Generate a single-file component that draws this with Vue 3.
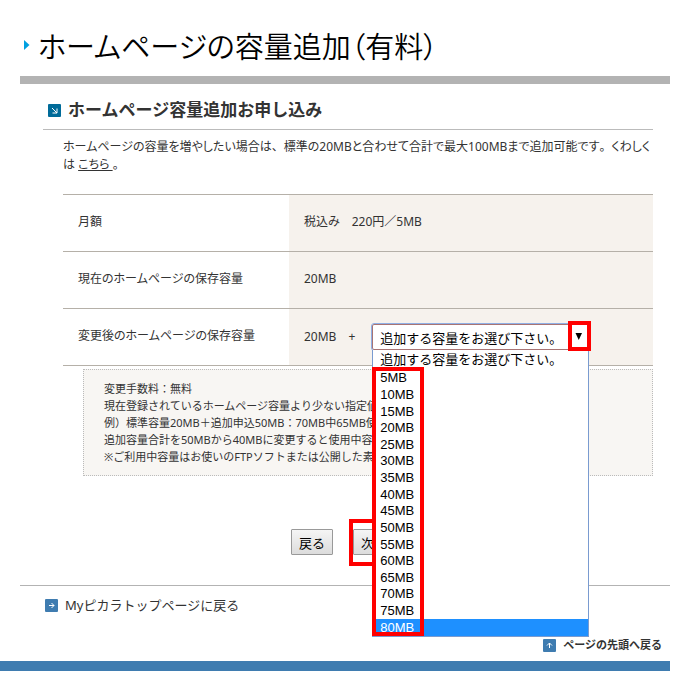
<template>
  <div class="page">
    <header class="title">
      <svg class="title-mark" width="6" height="10" viewBox="0 0 6 10" aria-hidden="true">
        <path d="M0 0l5.500 5L0 10z" fill="#00a0e0" />
      </svg>
      <h1>ホームページの容量追加（有料）</h1>
    </header>

    <main class="content">
      <h2>
        <svg width="13" height="13" viewBox="0 0 13 13" aria-hidden="true">
          <rect width="13" height="13" rx="1" fill="#006b99" />
          <path d="M4 4l5 5M9 4.500V9H4.500" fill="none" stroke="#fff" />
        </svg>
        ホームページ容量追加お申し込み
      </h2>

      <div class="body">
        <p class="lead">
          ホームページの容量を増やしたい場合は<span class="full">、</span>標準の20MBと合わせて合計で最大100MBまで追加可能です<span class="full">。</span>くわしく<span class="keep">は
          <a href="#">こちら </a>。</span>
        </p>

        <table>
          <tbody>
            <tr>
              <th scope="row">月額</th>
              <td>税込み　220円／5MB</td>
            </tr>
            <tr>
              <th scope="row">現在のホームページの保存容量</th>
              <td>20MB</td>
            </tr>
            <tr>
              <th scope="row"><label for="capacity">変更後のホームページの保存容量</label></th>
              <td>
                <div class="capacity">
                  <span>20MB　+</span>
                  <div class="picker">
                    <select id="capacity" v-model="selected" @mousedown.prevent="isOpen = !isOpen">
                      <option value="">{{ placeholder }}</option>
                      <option v-for="size in sizes" :key="size" :value="size">{{ size }}MB</option>
                    </select>
                    <svg class="arrow" width="8" height="7" viewBox="0 0 8 7" aria-hidden="true">
                      <path d="M0.500 0h6.500L3.750 7z" fill="#000" />
                    </svg>
                    <div v-if="isOpen" class="menu" role="listbox" aria-label="追加する容量">
                      <div class="menu-first" role="option" @click="choose('')">{{ placeholder }}</div>
                      <div class="menu-sizes">
                        <div
                          v-for="size in sizes"
                          :key="size"
                          class="menu-item"
                          :class="{ active: size === active }"
                          role="option"
                          :aria-selected="size === active"
                          @mouseenter="active = size"
                          @click="choose(size)"
                        >
                          {{ size }}MB
                        </div>
                      </div>
                    </div>
                    <span class="mark mark-arrow"></span>
                  </div>
                </div>
              </td>
            </tr>
          </tbody>
        </table>

        <div class="note">
          <p v-for="line in notes" :key="line">{{ line }}</p>
        </div>
      </div>
    </main>

    <div class="actions">
      <button type="button">戻る</button>
      <div class="next">
        <button type="button">次へ</button>
        <span class="mark mark-next"></span>
      </div>
    </div>

    <footer>
      <a class="home-link" href="#">
        <svg width="13" height="13" viewBox="0 0 13 13" aria-hidden="true">
          <rect width="13" height="13" rx="1" fill="#3f7cb0" />
          <path d="M4 6.500h5M6.500 4L9 6.500 6.500 9" fill="none" stroke="#fff" />
        </svg>
        Myピカラトップページに戻る
      </a>
      <a class="top-link" href="#">
        <svg width="13" height="13" viewBox="0 0 13 13" aria-hidden="true">
          <rect width="13" height="13" rx="1" fill="#3f7cb0" />
          <path d="M6.500 9V4M4 6.500L6.500 4 9 6.500" fill="none" stroke="#fff" />
        </svg>
        ページの先頭へ戻る
      </a>
    </footer>
  </div>
</template>

<script setup>
import { ref } from 'vue';

const placeholder = '追加する容量をお選び下さい。';
// 5MB から 80MB まで 5MB 刻み
const sizes = Array.from({ length: 16 }, (_, i) => (i + 1) * 5);

const notes = [
  '変更手数料：無料',
  '現在登録されているホームページ容量より少ない指定値',
  '例）標準容量20MB＋追加申込50MB：70MB中65MB使',
  '追加容量合計を50MBから40MBに変更すると使用中容',
  '※ご利用中容量はお使いのFTPソフトまたは公開した素',
];

const selected = ref('');
const active = ref(80);
const isOpen = ref(true);

function choose(size) {
  selected.value = size;
  isOpen.value = false;
}
</script>

<style>
body {
  margin: 0;
  background: #fff;
}
</style>

<style scoped>
.page {
  margin-right: 14px;
  font-family: 'Noto Sans', 'Noto Sans CJK JP', sans-serif;
  font-size: 12px;
  line-height: 18px;
  color: #333;
}

h1,
h2,
p {
  margin: 0;
}

a {
  color: #333;
}

/* タイトル */
.title {
  display: flex;
  align-items: center;
  gap: 8px;
  margin-left: 20px;
  padding: 25px 0 11px 4px;
  border-bottom: 8px solid #b3b3b3;
}
h1 {
  font-family: 'Noto Sans CJK JP', sans-serif;
  font-size: 29px;
  font-weight: 350;
  line-height: 40px;
  font-feature-settings: 'palt';
  color: #000;
}

.content {
  margin: 0 17px 0 43px;
}
h2 {
  display: flex;
  align-items: center;
  gap: 7px;
  padding: 13px 0 6px 5px;
  border-bottom: 1px solid #bbb;
  font-size: 17px;
  line-height: 26px;
}

.body {
  padding: 8px 0 0 20px;
}
.lead,
table {
  font-feature-settings: 'palt';
}
.lead {
  margin-bottom: 20px;
}
.full {
  font-feature-settings: normal;
}
.keep {
  white-space: nowrap;
}

/* 申し込み内容 */
table {
  width: 100%;
  border-collapse: collapse;
}
tr {
  height: 57px;
  border-top: 1px solid #b5b0a8;
  border-bottom: 1px solid #b5b0a8;
}
th,
td {
  padding: 0 15px 2px;
  text-align: left;
  font-weight: 400;
}
th {
  width: 196px;
}
td {
  padding-right: 0;
  background: #f6f2ed;
}
.capacity {
  display: flex;
  align-items: center;
  gap: 17px;
  padding-top: 2px;
}
.picker {
  position: relative;
  width: 217px;
}
select {
  display: block;
  box-sizing: border-box;
  width: 100%;
  height: 26px;
  padding: 2px 24px 0 7px;
  border: 1px solid #a87474;
  border-radius: 2px;
  outline: 1px solid #8fb0e6;
  appearance: none;
  background: #fff;
  font-family: 'Liberation Sans', 'Noto Sans CJK JP', sans-serif;
  font-size: 13px;
  color: #000;
}
.arrow {
  position: absolute;
  top: 9px;
  right: 6px;
  pointer-events: none;
}
.menu {
  position: absolute;
  z-index: 2;
  top: 100%;
  left: 0;
  right: 0;
  border: 1px solid #7a9bd0;
  border-top: 0;
  background: #fff;
  font-family: 'Liberation Sans', 'Noto Sans CJK JP', sans-serif;
  font-size: 13px;
  font-feature-settings: normal;
  color: #000;
  cursor: default;
}
.menu-first {
  padding-left: 7px;
  line-height: 20px;
}
.menu-sizes {
  position: relative;
  display: grid;
  grid-template-rows: repeat(16, 1fr);
  height: 266px;
  line-height: 16px;
}
/* 選択肢を囲む赤枠 */
.menu-sizes::after {
  content: '';
  position: absolute;
  top: -3px;
  bottom: 0;
  left: -1px;
  width: 44px;
  border: 4px solid #f00;
  pointer-events: none;
}
.menu-item {
  display: flex;
  align-items: center;
  padding-left: 7px;
}
.menu-item.active {
  background: #1e90ff;
  color: #fff;
}

/* 操作箇所の赤枠 */
.mark {
  position: absolute;
  border: 4px solid #f00;
  pointer-events: none;
}
.mark-arrow {
  z-index: 3;
  top: -3px;
  right: -2px;
  bottom: -1px;
  width: 15px;
}
.mark-next {
  inset: -10px -4px -11px;
}

.note {
  margin: 3px 0 0 20px;
  padding: 10px 20px;
  border: 1px dotted #bbb;
  background: #f8f6f3;
  font-size: 11px;
  line-height: 17px;
}

.actions {
  display: flex;
  justify-content: center;
  gap: 20px;
  margin: 53px 0 30px 16px;
}
.actions button {
  height: 26px;
  padding: 0 7px;
  border: 1px solid #999;
  border-radius: 1px;
  background: linear-gradient(#f5f5f5, #dcdcdc);
  font-family: 'Liberation Sans', 'Noto Sans CJK JP', sans-serif;
  font-size: 13px;
  color: #000;
}
.next {
  position: relative;
}

/* フッター */
footer {
  display: flex;
  flex-direction: column;
  border-bottom: 10px solid #3f7cb0;
}
footer a {
  display: flex;
  align-items: center;
  gap: 7px;
  text-decoration: none;
}
.home-link {
  margin-left: 20px;
  padding: 8px 0 20px 25px;
  border-top: 1px solid #b3b3b3;
  font-size: 13px;
  line-height: 22px;
}
.top-link {
  align-self: flex-end;
  margin-right: 8px;
  padding-bottom: 7px;
  font-size: 11px;
  font-weight: 700;
}
</style>
